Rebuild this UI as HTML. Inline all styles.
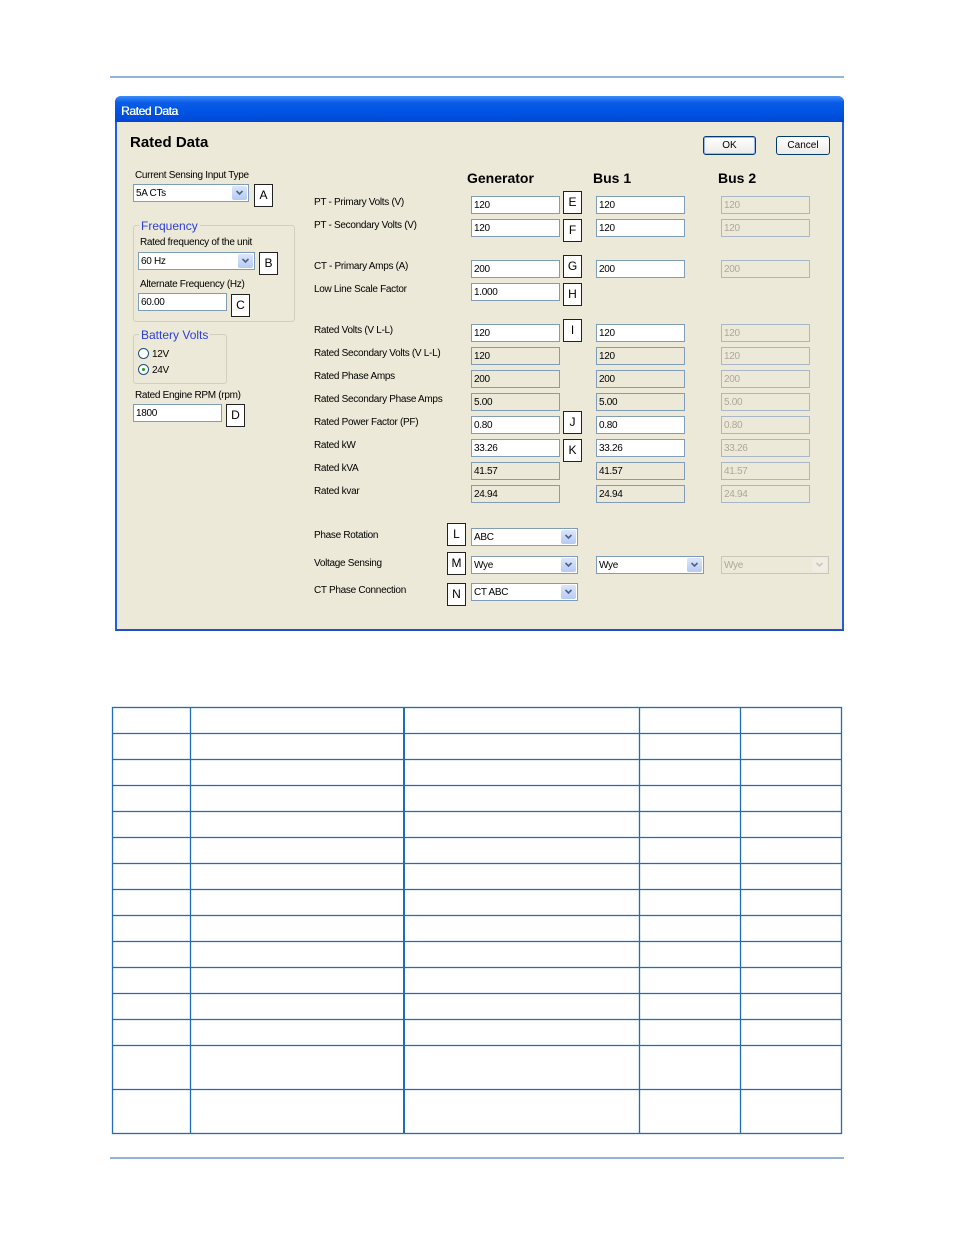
<!DOCTYPE html>
<html><head><meta charset="utf-8"><style>
*{margin:0;padding:0;box-sizing:border-box}
body{width:954px;height:1235px;background:#fff;position:relative;font-family:"Liberation Sans",sans-serif;font-size:10px;color:#000;overflow:hidden}
.a{position:absolute}
.t{position:absolute;font-size:10px;letter-spacing:-0.3px;white-space:nowrap;line-height:12px;margin-top:1px}
.f{position:absolute;height:18px;width:89px;border:1px solid #7F9DB9;background:#fff;font-size:10px;letter-spacing:-0.3px;padding:3px 0 0 2px;line-height:12px}
.r{background:#ECE9D8}
.d{background:#ECE9D8;border-color:#A9B8C8;color:#ACA899}
.b{position:absolute;width:19px;height:23px;border:1px solid #222;background:#fff;font-size:12px;text-align:center;line-height:20px}
.c{position:absolute;height:18px;border:1px solid #7F9DB9;background:#fff;font-size:10px;letter-spacing:-0.3px;padding:3px 0 0 2px;line-height:12px}
.c i{position:absolute;right:1px;top:1px;width:15px;height:14px;background:linear-gradient(#dbe6fb,#b6caf5);border-radius:2px}
.c i:after{content:"";position:absolute;left:4px;top:3px;width:7px;height:5px;background:url("data:image/svg+xml;utf8,")}
.c.dd{background:#ECE9D8;border-color:#C9C7BA;color:#ACA899}
.c.dd i{background:#EFEDE4}
.g{position:absolute;border:1px solid #D0D0BF;border-radius:3px}
.gl{position:absolute;background:#ECE9D8;color:#2e3fdb;font-size:12px;padding:0 2px;line-height:13px}
.h{position:absolute;font-weight:bold;font-size:14px;margin-top:1px}
svg.ar{position:absolute;right:4px;top:4px}
</style></head><body>
<div class="a" style="left:110px;top:76px;width:734px;height:2px;background:#95B3D7"></div>
<div class="a" style="left:110px;top:1157px;width:734px;height:2px;background:#95B3D7"></div>

<div class="a" style="left:115px;top:96px;width:729px;height:535px;background:#ECE9D8;border-left:2px solid #1d5fe0;border-right:2px solid #1d5fe0;border-bottom:2px solid #1d4fd0;border-radius:6px 6px 0 0"></div>
<div class="a" style="left:115px;top:96px;width:729px;height:26px;border-radius:6px 6px 0 0;background:linear-gradient(#3d8cf8 0%,#0a5ce8 25%,#0054e3 60%,#0048d4 100%)"></div>
<div class="t" style="left:121px;top:104px;color:#fff;font-size:12px;letter-spacing:-0.4px;text-shadow:0.4px 0 0 #fff">Rated Data</div>
<div class="t" style="left:130px;top:133px;font-size:15px;font-weight:bold;line-height:18px;letter-spacing:0">Rated Data</div>

<div class="a" style="left:703px;top:136px;width:53px;height:19px;border:1px solid #003c74;border-radius:3px;background:linear-gradient(#fff,#ecebe6);box-shadow:inset 0 0 0 1px #99b8ec;text-align:center;line-height:18px;font-size:10px">OK</div>
<div class="a" style="left:776px;top:136px;width:54px;height:19px;border:1px solid #003c74;border-radius:3px;background:linear-gradient(#fff,#ecebe6);text-align:center;line-height:18px;font-size:10px">Cancel</div>

<div class="t" style="left:135px;top:169px">Current Sensing Input Type</div>
<div class="c" style="left:133px;top:184px;width:116px">5A CTs<i><svg class="ar" style="right:4px;top:4px" width="7" height="6"><path d="M0.5 1 L3.5 4 L6.5 1" stroke="#4d6185" stroke-width="1.6" fill="none"/></svg></i></div>
<div class="b" style="left:254px;top:184px">A</div>

<div class="g" style="left:133px;top:225px;width:162px;height:97px"></div>
<div class="gl" style="left:139px;top:220px">Frequency</div>
<div class="t" style="left:140px;top:236px">Rated frequency of the unit</div>
<div class="c" style="left:138px;top:252px;width:117px">60 Hz<i><svg class="ar" width="7" height="6"><path d="M0.5 1 L3.5 4 L6.5 1" stroke="#4d6185" stroke-width="1.6" fill="none"/></svg></i></div>
<div class="b" style="left:259px;top:252px">B</div>
<div class="t" style="left:140px;top:278px">Alternate Frequency (Hz)</div>
<div class="f" style="left:138px;top:293px;width:89px">60.00</div>
<div class="b" style="left:231px;top:294px">C</div>

<div class="g" style="left:133px;top:334px;width:94px;height:50px"></div>
<div class="gl" style="left:139px;top:329px">Battery Volts</div>
<div class="a" style="left:138px;top:348px;width:11px;height:11px;border:1px solid #1c5180;border-radius:50%;background:#fff"></div>
<div class="t" style="left:152px;top:348px">12V</div>
<div class="a" style="left:138px;top:364px;width:11px;height:11px;border:1px solid #1c5180;border-radius:50%;background:#fff"></div>
<div class="a" style="left:142px;top:368px;width:3px;height:3px;border-radius:50%;background:#21a121"></div>
<div class="t" style="left:152px;top:364px">24V</div>

<div class="t" style="left:135px;top:389px">Rated Engine RPM (rpm)</div>
<div class="f" style="left:133px;top:404px;width:89px">1800</div>
<div class="b" style="left:226px;top:404px">D</div>

<div class="h" style="left:467px;top:169px">Generator</div>
<div class="h" style="left:593px;top:169px">Bus 1</div>
<div class="h" style="left:718px;top:169px">Bus 2</div>

<div class="t" style="left:314px;top:196px">PT - Primary Volts (V)</div>
<div class="f" style="left:471px;top:196px">120</div><div class="f" style="left:596px;top:196px">120</div><div class="f d" style="left:721px;top:196px">120</div>
<div class="b" style="left:563px;top:191px">E</div>

<div class="t" style="left:314px;top:219px">PT - Secondary Volts (V)</div>
<div class="f" style="left:471px;top:219px">120</div><div class="f" style="left:596px;top:219px">120</div><div class="f d" style="left:721px;top:219px">120</div>
<div class="b" style="left:563px;top:219px">F</div>

<div class="t" style="left:314px;top:260px">CT - Primary Amps (A)</div>
<div class="f" style="left:471px;top:260px">200</div><div class="f" style="left:596px;top:260px">200</div><div class="f d" style="left:721px;top:260px">200</div>
<div class="b" style="left:563px;top:255px">G</div>

<div class="t" style="left:314px;top:283px">Low Line Scale Factor</div>
<div class="f" style="left:471px;top:283px">1.000</div>
<div class="b" style="left:563px;top:283px">H</div>

<div class="t" style="left:314px;top:324px">Rated Volts (V L-L)</div>
<div class="f" style="left:471px;top:324px">120</div><div class="f" style="left:596px;top:324px">120</div><div class="f d" style="left:721px;top:324px">120</div>
<div class="b" style="left:563px;top:319px">I</div>

<div class="t" style="left:314px;top:347px">Rated Secondary Volts (V L-L)</div>
<div class="f r" style="left:471px;top:347px">120</div><div class="f r" style="left:596px;top:347px">120</div><div class="f d" style="left:721px;top:347px">120</div>

<div class="t" style="left:314px;top:370px">Rated Phase Amps</div>
<div class="f r" style="left:471px;top:370px">200</div><div class="f r" style="left:596px;top:370px">200</div><div class="f d" style="left:721px;top:370px">200</div>

<div class="t" style="left:314px;top:393px">Rated Secondary Phase Amps</div>
<div class="f r" style="left:471px;top:393px">5.00</div><div class="f r" style="left:596px;top:393px">5.00</div><div class="f d" style="left:721px;top:393px">5.00</div>

<div class="t" style="left:314px;top:416px">Rated Power Factor (PF)</div>
<div class="f" style="left:471px;top:416px">0.80</div><div class="f" style="left:596px;top:416px">0.80</div><div class="f d" style="left:721px;top:416px">0.80</div>
<div class="b" style="left:563px;top:411px">J</div>

<div class="t" style="left:314px;top:439px">Rated kW</div>
<div class="f" style="left:471px;top:439px">33.26</div><div class="f" style="left:596px;top:439px">33.26</div><div class="f d" style="left:721px;top:439px">33.26</div>
<div class="b" style="left:563px;top:439px">K</div>

<div class="t" style="left:314px;top:462px">Rated kVA</div>
<div class="f r" style="left:471px;top:462px">41.57</div><div class="f r" style="left:596px;top:462px">41.57</div><div class="f d" style="left:721px;top:462px">41.57</div>

<div class="t" style="left:314px;top:485px">Rated kvar</div>
<div class="f r" style="left:471px;top:485px">24.94</div><div class="f r" style="left:596px;top:485px">24.94</div><div class="f d" style="left:721px;top:485px">24.94</div>

<div class="t" style="left:314px;top:529px">Phase Rotation</div>
<div class="b" style="left:447px;top:523px">L</div>
<div class="c" style="left:471px;top:528px;width:107px">ABC<i><svg class="ar" width="7" height="6"><path d="M0.5 1 L3.5 4 L6.5 1" stroke="#4d6185" stroke-width="1.6" fill="none"/></svg></i></div>

<div class="t" style="left:314px;top:557px">Voltage Sensing</div>
<div class="b" style="left:447px;top:552px">M</div>
<div class="c" style="left:471px;top:556px;width:107px">Wye<i><svg class="ar" width="7" height="6"><path d="M0.5 1 L3.5 4 L6.5 1" stroke="#4d6185" stroke-width="1.6" fill="none"/></svg></i></div>
<div class="c" style="left:596px;top:556px;width:108px">Wye<i><svg class="ar" width="7" height="6"><path d="M0.5 1 L3.5 4 L6.5 1" stroke="#4d6185" stroke-width="1.6" fill="none"/></svg></i></div>
<div class="c dd" style="left:721px;top:556px;width:108px">Wye<i><svg class="ar" width="7" height="6"><path d="M0.5 1 L3.5 4 L6.5 1" stroke="#C9C7BA" stroke-width="1.6" fill="none"/></svg></i></div>

<div class="t" style="left:314px;top:584px">CT Phase Connection</div>
<div class="b" style="left:447px;top:583px">N</div>
<div class="c" style="left:471px;top:583px;width:107px">CT ABC<i><svg class="ar" width="7" height="6"><path d="M0.5 1 L3.5 4 L6.5 1" stroke="#4d6185" stroke-width="1.6" fill="none"/></svg></i></div>

<svg class="a" style="left:0;top:0" width="954" height="1235">
<g stroke="#1F6DB3" stroke-width="1.3" fill="none">
<rect x="112.5" y="707.5" width="729" height="426"/>
<line x1="190.5" y1="707" x2="190.5" y2="1134"/>
<line x1="404" y1="707" x2="404" y2="1134" stroke-width="2"/>
<line x1="639.5" y1="707" x2="639.5" y2="1134"/>
<line x1="740.5" y1="707" x2="740.5" y2="1134"/>
<line x1="112" y1="733.5" x2="842" y2="733.5"/>
<line x1="112" y1="759.5" x2="842" y2="759.5"/>
<line x1="112" y1="785.5" x2="842" y2="785.5"/>
<line x1="112" y1="811.5" x2="842" y2="811.5"/>
<line x1="112" y1="837.5" x2="842" y2="837.5"/>
<line x1="112" y1="863.5" x2="842" y2="863.5"/>
<line x1="112" y1="889.5" x2="842" y2="889.5"/>
<line x1="112" y1="915.5" x2="842" y2="915.5"/>
<line x1="112" y1="941.5" x2="842" y2="941.5"/>
<line x1="112" y1="967.5" x2="842" y2="967.5"/>
<line x1="112" y1="993.5" x2="842" y2="993.5"/>
<line x1="112" y1="1019.5" x2="842" y2="1019.5"/>
<line x1="112" y1="1045.5" x2="842" y2="1045.5"/>
<line x1="112" y1="1089.5" x2="842" y2="1089.5"/>
</g></svg>
</body></html>
